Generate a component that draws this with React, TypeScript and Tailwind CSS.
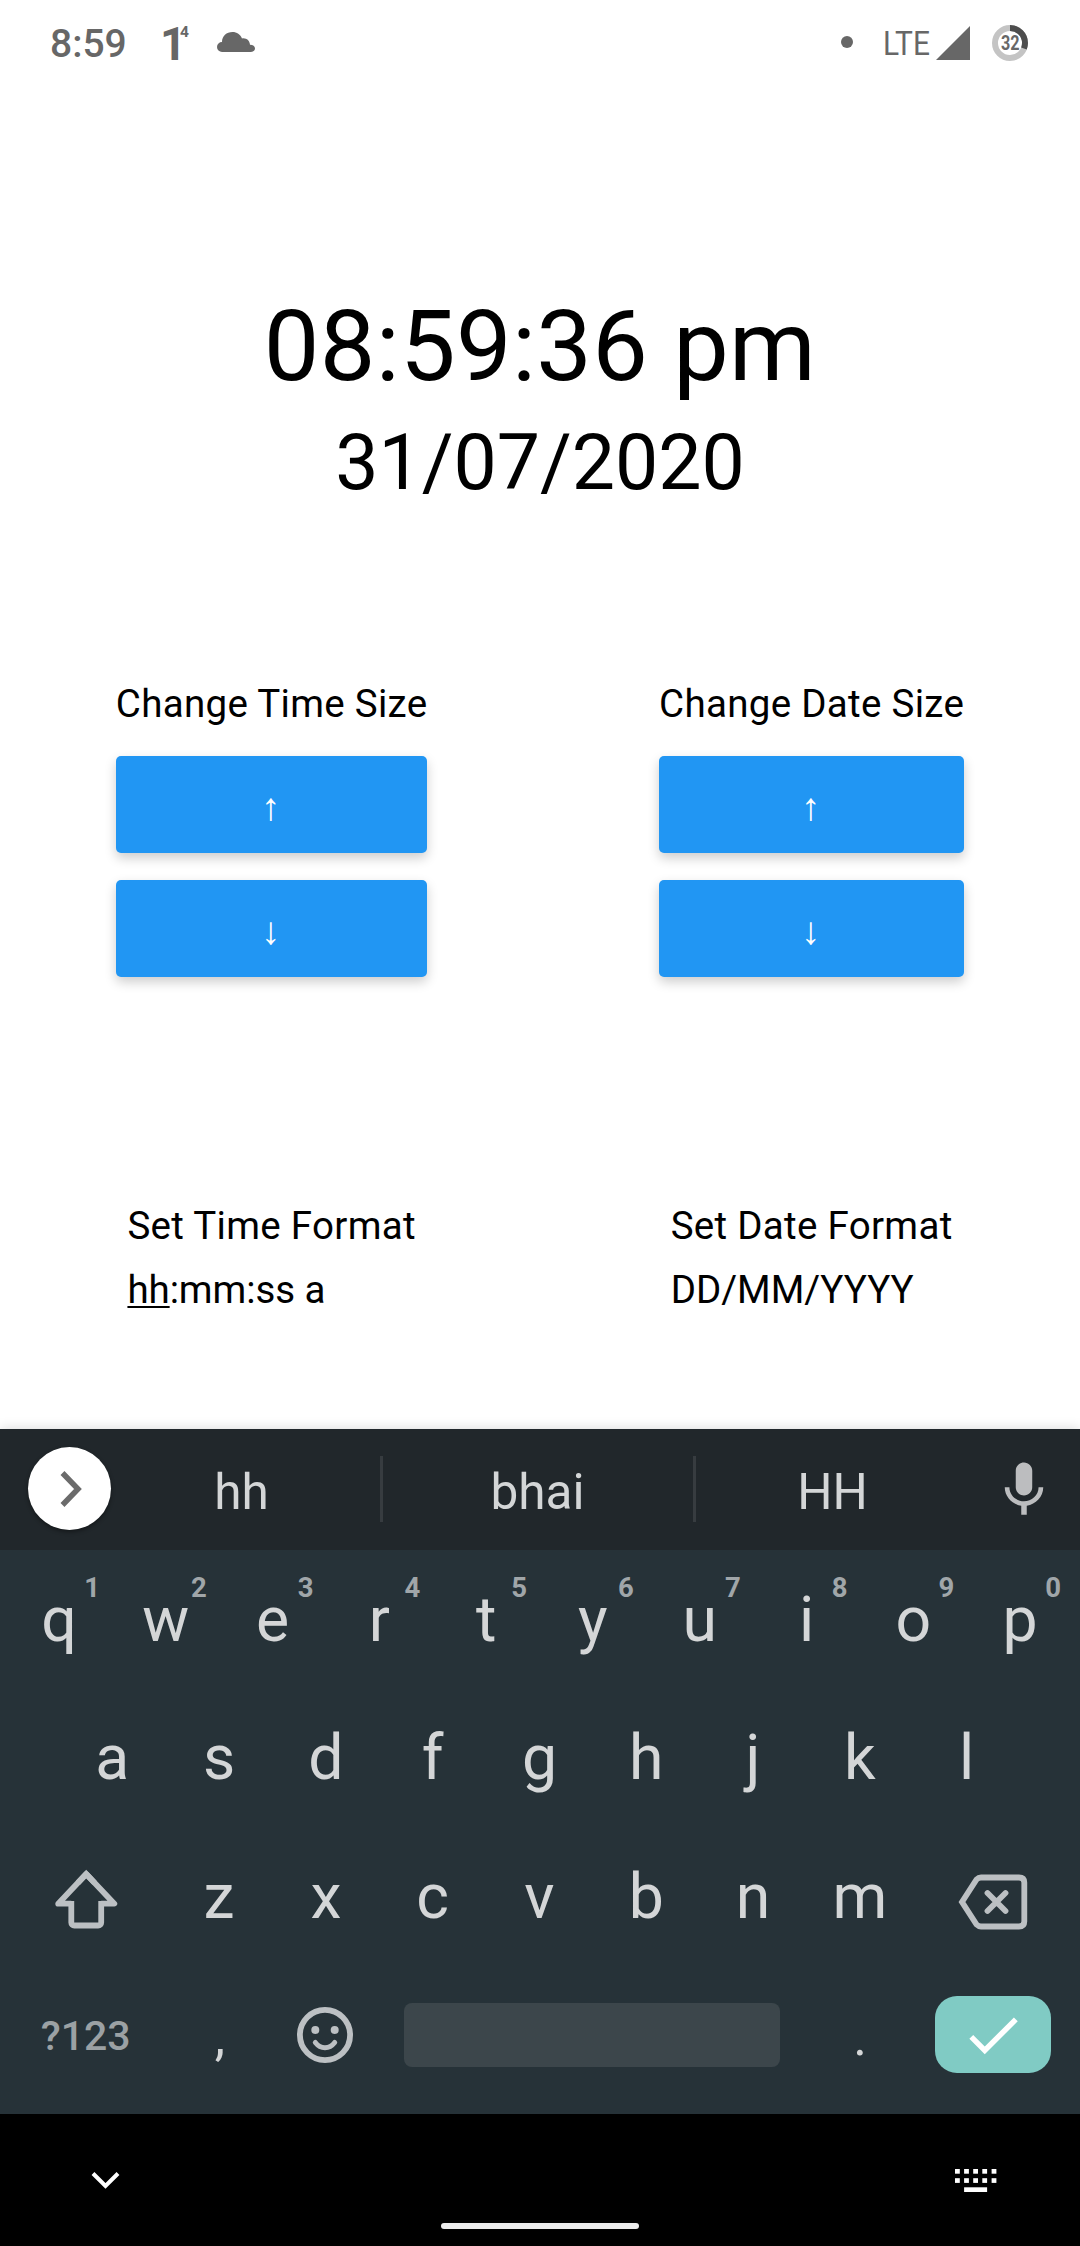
import React from "react";

const TOP_ROW = ["q", "w", "e", "r", "t", "y", "u", "i", "o", "p"];
const HOME_ROW = ["a", "s", "d", "f", "g", "h", "j", "k", "l"];
const BOTTOM_ROW = ["z", "x", "c", "v", "b", "n", "m"];

function StatusBar() {
  return (
    <header className="flex h-[84px] items-center justify-between pl-[50px] pr-[52px] text-[#676767]">
      <div className="flex items-center">
        <span className="w-[113px] pt-[3px] text-[39px] leading-[48px] font-medium">8:59</span>
        <span className="relative block h-[84px] w-[54px]">
          <span className="absolute -left-[3px] top-[16px] text-[46px] leading-[56px] font-bold">1</span>
          <span className="absolute left-[17px] top-[22px] text-[15.5px] leading-[20px] font-bold">4</span>
        </span>
        <svg className="h-[20px] w-[38px]" viewBox="0 0 38 20" fill="currentColor">
          <path d="M5 20a5 5 0 0 1 0-10C5 4 9.500 0 15.500 0c4.300 0 8 2.600 9.500 6.400 4.300-.8 7.800 2.200 8 6.400 3 0 5 1.500 5 3.700S36 20 33.500 20Z" />
        </svg>
      </div>
      <div className="flex items-center">
        <span className="mr-[30px] size-[12px] rounded-full bg-[#676767]" />
        <span className="w-[53px] pt-[1px] text-[34px] leading-[44px]">
          <span className="inline-block origin-left scale-x-[0.88]">LTE</span>
        </span>
        <svg className="mt-[2px] mr-[22px] size-[34px]" viewBox="0 0 34 34" fill="currentColor">
          <path d="M34 0v34H0Z" />
        </svg>
        <span className="relative mt-[2px] flex size-[36px] items-center justify-center">
          <svg className="absolute inset-0 size-[36px] -rotate-90" viewBox="0 0 36 36" fill="none" strokeWidth="6">
            <circle cx="18" cy="18" r="15" stroke="#c4c4c4" />
            <circle cx="18" cy="18" r="15" stroke="#4d4d4d" pathLength="100" strokeDasharray="31 69" />
          </svg>
          <span className="relative scale-x-[0.83] pt-[1px] text-[19.5px] leading-[20px] font-bold">32</span>
        </span>
      </div>
    </header>
  );
}

function SizeControl({ label }: { label: string }) {
  return (
    <section className="flex flex-col">
      <h2 className="text-[38.5px] leading-[52px] tracking-[0.3px]">{label}</h2>
      {["↑", "↓"].map((arrow, i) => (
        <button
          key={arrow}
          className={`${i === 0 ? "mt-[26px]" : "mt-[27px]"} flex h-[97px] items-center justify-center rounded-[5px] bg-[#2196f3] pt-[4px] pr-[2px] text-[38.5px] leading-[52px] text-white shadow-[0_5px_12px_rgba(0,0,0,0.2)]`}
        >
          {arrow}
        </button>
      ))}
    </section>
  );
}

function Key({ label, hint }: { label: string; hint?: string }) {
  return (
    <div className="relative flex h-full w-[106.8px] items-center justify-center pr-[1px] text-[62.5px] leading-[80px]">
      {label}
      {hint && (
        <span className="absolute left-[78px] top-[21px] w-[16px] text-center text-[27.5px] leading-[32px] font-bold text-[#a0a6a9]">
          {hint}
        </span>
      )}
    </div>
  );
}

function PunctuationKey({ label }: { label: string }) {
  return (
    <div className="flex h-full w-[106.8px] items-center justify-center pt-[6px] text-[52px] leading-[80px]">
      {label}
    </div>
  );
}

function SuggestionBar() {
  return (
    <div className="flex h-[121px] items-center bg-[#21272b] text-[49.5px] leading-[60px]">
      <div className="mb-[2px] ml-[28px] flex size-[83px] shrink-0 items-center justify-center rounded-full bg-white shadow-[0_2px_4px_rgba(0,0,0,0.4)]">
        <svg className="size-[40px]" viewBox="0 0 40 40" fill="none" stroke="#6b6b6b" strokeWidth="5.500">
          <path d="M12.500 4 28 20 12.500 36" />
        </svg>
      </div>
      <span className="w-[262px] pt-[4px] pr-[1px] text-center">hh</span>
      <span className="mb-[2px] ml-[7px] h-[66px] w-[3px] bg-[#373c40]" />
      <span className="w-[310px] pt-[4px] pr-[1px] text-center">bhai</span>
      <span className="mb-[2px] h-[66px] w-[3px] bg-[#373c40]" />
      <span className="w-[274px] pt-[4px] pr-[1px] text-center">HH</span>
      <svg className="ml-[21px] size-[66px]" viewBox="0 0 24 24" fill="#bcbdbf">
        <path d="M12 14c1.660 0 2.990-1.340 2.990-3L15 5c0-1.660-1.340-3-3-3S9 3.340 9 5v6c0 1.660 1.340 3 3 3zm5.300-3c0 3-2.540 5.100-5.300 5.100S6.700 14 6.700 11H5c0 3.410 2.720 6.230 6 6.720V21h2v-3.280c3.280-.48 6-3.300 6-6.720h-1.700z" />
      </svg>
    </div>
  );
}

function Keyboard() {
  return (
    <div className="h-[685px] bg-[#263238] text-[#d4d6d7] shadow-[0_0_12px_rgba(0,0,0,0.16)]">
      <SuggestionBar />
      <div className="flex h-[138.4px] justify-center pt-[1px]">
        {TOP_ROW.map((k, i) => (
          <Key key={k} label={k} hint={String((i + 1) % 10)} />
        ))}
      </div>
      <div className="flex h-[138.4px] justify-center pt-[1px]">
        {HOME_ROW.map((k) => (
          <Key key={k} label={k} />
        ))}
      </div>
      <div className="flex h-[138.4px] items-center justify-center pt-[2px]">
        <div className="flex w-[160.2px] justify-center pr-[1px]">
          <svg className="mt-[6px] size-[64px]" viewBox="0 0 64 64" fill="none" stroke="#bcc0c3" strokeWidth="5.800">
            <path d="M17.300 33V54.500a3 3 0 0 0 3 3H44.200a3 3 0 0 0 3-3V33" />
            <path d="M17.300 35.700H4.200L32.200 6 60.300 35.700H47.200" strokeLinejoin="round" />
            <path d="M24 14.700 32.200 6 40.500 14.700" strokeLinejoin="miter" />
          </svg>
        </div>
        {BOTTOM_ROW.map((k) => (
          <Key key={k} label={k} />
        ))}
        <div className="flex w-[160.2px] justify-center pr-[1px]">
          <svg
            className="mt-[10px] h-[56px] w-[72px]"
            viewBox="0 0 72 56"
            fill="none"
            stroke="#bcc0c3"
            strokeWidth="5.800"
          >
            <path d="M5 28 19.500 5.500Q21.500 3.500 24 3.500H62Q67.300 3.500 67.300 8.500V47.500Q67.300 52.500 62 52.500H24Q21.500 52.500 19.500 50.500Z" />
            <path d="M30.500 19 48.500 37M48.500 19 30.500 37" strokeLinecap="round" />
          </svg>
        </div>
      </div>
      <div className="flex h-[138.4px] items-center pt-[1px]">
        <span className="ml-[6px] w-[160.500px] pt-[2px] pr-[1px] text-center text-[41px] leading-[50px] font-medium text-[#9ba1a4]">
          ?123
        </span>
        <PunctuationKey label="," />
        <div className="flex w-[103px] justify-center">
          <svg className="size-[56px]" viewBox="0 0 56 56" fill="none" stroke="#bcc0c3">
            <circle cx="28" cy="28" r="25.100" strokeWidth="5.800" />
            <circle cx="18.300" cy="23" r="4" fill="#bcc0c3" stroke="none" />
            <circle cx="37.700" cy="23" r="4" fill="#bcc0c3" stroke="none" />
            <path d="M18.300 35.500c5.500 7 13.900 7 19.400 0" strokeWidth="5" strokeLinecap="round" />
          </svg>
        </div>
        <span className="ml-[27.500px] h-[64px] w-[376px] rounded-[8px] bg-[#3c464b]" />
        <span className="ml-[27px] flex h-full">
          <PunctuationKey label="." />
        </span>
        <div className="ml-[21px] flex h-[77px] w-[116px] items-center justify-center rounded-[22px] bg-[#80cbc4]">
          <svg className="size-[66px]" viewBox="0 0 24 24" fill="#fff">
            <path d="M9 16.200 4.800 12l-1.400 1.400L9 19 21 7l-1.400-1.400z" />
          </svg>
        </div>
      </div>
    </div>
  );
}

function NavigationBar() {
  return (
    <footer className="flex h-[132px] flex-col bg-black">
      <div className="flex h-[109px] items-start justify-between pl-[90px] pr-[83px]">
        <svg className="mt-[56px] h-[20px] w-[32px]" viewBox="0 0 32 20" fill="none" stroke="#fff" strokeWidth="4">
          <path d="M3 3.500 15.500 16 28 3.500" />
        </svg>
        <svg className="mt-[55px] h-[23px] w-[42px]" viewBox="0 0 42 23" fill="#fff">
          {[0, 9.1, 18.2, 27.3, 36.6].map((x) => (
            <React.Fragment key={x}>
              <rect x={x} y="0" width="4.800" height="4.700" />
              <rect x={x} y="9.200" width="4.800" height="4.700" />
            </React.Fragment>
          ))}
          <rect x="9.100" y="18.300" width="23" height="4.700" />
        </svg>
      </div>
      <span className="mx-auto h-[6px] w-[198px] rounded-[3px] bg-[#ececec]" />
    </footer>
  );
}

export default function App() {
  return (
    <div className="flex h-[2246px] w-[1080px] flex-col overflow-hidden bg-white font-[Roboto,'Noto_Sans',sans-serif] text-black">
      <StatusBar />
      <main className="flex h-[1345px] shrink-0 flex-col">
        <div className="mt-[197px] flex flex-col items-center">
          <h1 className="text-[99px] leading-[131px] tracking-[0.35px]">08:59:36 pm</h1>
          <p className="text-[77px] leading-[102px]">31/07/2020</p>
        </div>
        <div className="mt-[164px] flex justify-around">
          <SizeControl label="Change Time Size" />
          <SizeControl label="Change Date Size" />
        </div>
        <div className="mt-[223px] flex justify-around text-[38.5px] leading-[52px]">
          <div>
            <h2 className="tracking-[0.3px]">Set Time Format</h2>
            <p className="mt-[12px] tracking-[-0.1px]">
              <span className="underline decoration-2 underline-offset-[3px]">hh</span>:mm:ss a
            </p>
          </div>
          <div>
            <h2 className="tracking-[0.3px]">Set Date Format</h2>
            <p className="mt-[12px]">DD/MM/YYYY</p>
          </div>
        </div>
      </main>
      <Keyboard />
      <NavigationBar />
    </div>
  );
}
